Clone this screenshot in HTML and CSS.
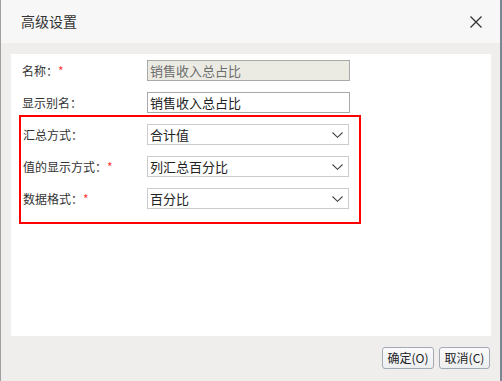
FILE: index.html
```html
<!DOCTYPE html>
<html lang="zh">
<head>
<meta charset="utf-8">
<title>高级设置</title>
<link rel="stylesheet" href="styles.css">
</head>
<body>
<div class="dialog">
  <div class="header">
    <span class="title">高级设置</span>
    <svg class="close" width="12" height="12" viewBox="0 0 12 12"><path d="M0.5 0.5 L11.5 11.5 M11.5 0.5 L0.5 11.5" stroke="#333" stroke-width="1.3" fill="none"/></svg>
  </div>
  <div class="body">
    <div class="panel">
      <div class="row">
        <label class="label">名称<span class="colon">：</span><span class="req">*</span></label>
        <div class="input disabled">销售收入总占比</div>
      </div>
      <div class="row">
        <label class="label">显示别名<span class="colon">：</span></label>
        <div class="input">销售收入总占比</div>
      </div>
      <div class="group">
        <div class="row">
          <label class="label">汇总方式<span class="colon">：</span></label>
          <div class="select"><span>合计值</span><svg class="chev" width="11" height="6" viewBox="0 0 11 6"><path d="M0.5 0.5 L5.5 5.3 L10.5 0.5" stroke="#444" stroke-width="1.1" fill="none"/></svg></div>
        </div>
        <div class="row">
          <label class="label">值的显示方式<span class="colon">：</span><span class="req">*</span></label>
          <div class="select"><span>列汇总百分比</span><svg class="chev" width="11" height="6" viewBox="0 0 11 6"><path d="M0.5 0.5 L5.5 5.3 L10.5 0.5" stroke="#444" stroke-width="1.1" fill="none"/></svg></div>
        </div>
        <div class="row">
          <label class="label">数据格式<span class="colon">：</span><span class="req">*</span></label>
          <div class="select"><span>百分比</span><svg class="chev" width="11" height="6" viewBox="0 0 11 6"><path d="M0.5 0.5 L5.5 5.3 L10.5 0.5" stroke="#444" stroke-width="1.1" fill="none"/></svg></div>
        </div>
      </div>
    </div>
    <div class="footer">
      <button class="btn">确定(O)</button>
      <button class="btn btn2">取消(C)</button>
    </div>
  </div>
</div>
</body>
</html>
```
FILE: styles.css
```css
html, body {
  margin: 0;
  padding: 0;
  background: #7d8590;
}
body {
  font-family: "Noto Sans CJK SC", "Noto Sans", sans-serif;
  color: #333;
}
.dialog {
  width: 500px;
  height: 381px;
  display: flex;
  flex-direction: column;
  border-left: 1px solid #a0a0a0;
  background: #efeeec;
  box-sizing: border-box;
}
.header {
  height: 43px;
  flex: none;
  background: #f7f7f7;
  display: flex;
  align-items: center;
  justify-content: space-between;
  padding: 0 18px 0 20px;
}
.title {
  font-size: 14px;
  color: #333;
  line-height: 1;
  margin-top: -1px;
}
.close {
  display: block;
}
.body {
  flex: 1;
  padding: 11px 9px 0 10px;
  display: flex;
  flex-direction: column;
}
.panel {
  background: #fff;
  height: 282px;
  padding: 6px 0 0 11px;
  box-sizing: border-box;
}
.row {
  display: flex;
  align-items: center;
  height: 21px;
  margin-bottom: 11px;
}
.label {
  width: 125px;
  flex: none;
  font-size: 12px;
  color: #333;
  white-space: nowrap;
}
.colon {
  font-family: "Noto Sans CJK TC", "Noto Sans CJK SC", sans-serif;
}
.req {
  color: #ff3b3b;
  font-size: 12px;
}
.input {
  width: 203px;
  height: 21px;
  box-sizing: border-box;
  border: 1px solid #a9a9a9;
  font-size: 13px;
  line-height: 19px;
  padding-left: 2px;
  color: #222;
  white-space: nowrap;
}
.input.disabled {
  background: #ebebe4;
  color: #6d6d6d;
}
.group {
  margin: -9px 0 0 -3px;
  width: 342px;
  height: 109px;
  box-sizing: border-box;
  border: 2px solid #f00;
  padding: 7px 0 0 2px;
}
.group .label {
  width: 124px;
}
.select {
  width: 202px;
  height: 21px;
  box-sizing: border-box;
  border: 1px solid #cbcbcb;
  font-size: 13px;
  line-height: 19px;
  padding: 0 5px 0 2px;
  display: flex;
  align-items: center;
  justify-content: space-between;
  color: #222;
}
.chev {
  display: block;
}
.footer {
  display: flex;
  justify-content: flex-end;
  gap: 5px;
  padding-top: 11px;
  padding-right: 1px;
}
.btn {
  height: 22px;
  width: 52px;
  padding: 0;
  font-family: "Noto Sans CJK SC", "Noto Sans", sans-serif;
  font-size: 12px;
  color: #222;
  border: 1px solid #a3aab5;
  border-radius: 3px;
  background: linear-gradient(#fbfbfb, #eceef0);
  line-height: 20px;
}
.btn2 {
  width: 51px;
}
```
